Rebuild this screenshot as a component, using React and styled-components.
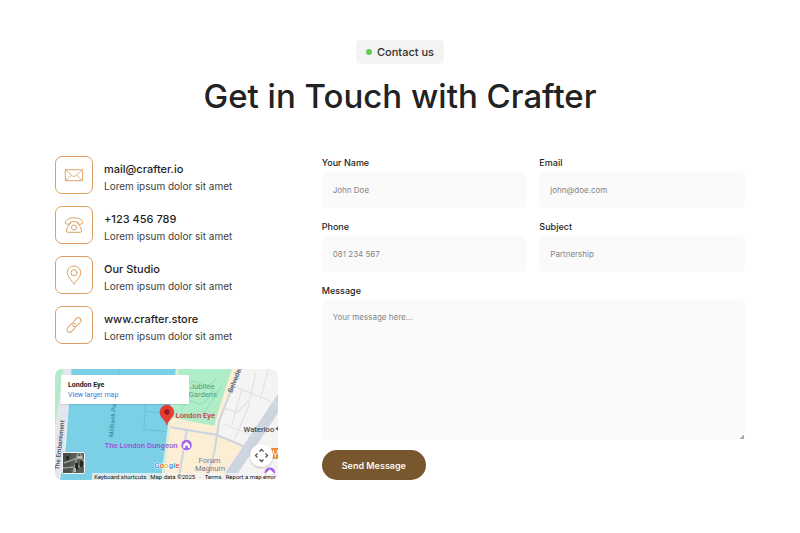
import React from "react";
import styled, { createGlobalStyle } from "styled-components";

const GlobalStyle = createGlobalStyle`
  *, *::before, *::after { box-sizing: border-box; }
  body {
    margin: 0;
    background: #ffffff;
    color: #222222;
    font-family: Inter, "Liberation Sans", sans-serif;
  }
  h1, h2, p { margin: 0; }
`;

const Page = styled.main`
  width: 100%;
  max-width: 800px;
  margin: 0 auto;
  padding: 40px 55px 53px;
`;

const Header = styled.header`
  display: flex;
  flex-direction: column;
  align-items: center;
  gap: 12px;
  text-align: center;
`;

const Badge = styled.p`
  display: flex;
  align-items: center;
  gap: 5px;
  height: 24px;
  padding: 0 10px;
  border-radius: 5px;
  background: #f4f3f2;
  color: #303030;
  font-size: 11px;
  font-weight: 500;
`;

const Dot = styled.span`
  width: 6px;
  height: 6px;
  border-radius: 50%;
  background: #62cd55;
`;

const Title = styled.h1`
  font-size: 33px;
  line-height: 40px;
  font-weight: 500;
  color: #222222;
`;

const Columns = styled.div`
  display: grid;
  grid-template-columns: minmax(0, 1fr) minmax(0, 1.9fr);
  gap: 44px;
  align-items: start;
  margin-top: 40px;
`;

const Info = styled.section`
  display: flex;
  flex-direction: column;
  gap: 25px;
`;

const ContactList = styled.ul`
  display: grid;
  gap: 12px;
  margin: 0;
  padding: 0;
  list-style: none;
`;

const ContactItem = styled.li`
  display: flex;
  align-items: flex-end;
  gap: 11px;
`;

const IconBox = styled.span`
  display: grid;
  place-items: center;
  flex: none;
  width: 38px;
  height: 38px;
  border: 1px solid #dd9f62;
  border-radius: 7px;
`;

const Icon = styled.svg`
  width: 20px;
  height: 20px;
  fill: none;
  stroke: #d9a468;
  stroke-linecap: round;
  stroke-linejoin: round;
`;

const ContactName = styled.h2`
  font-size: 11px;
  line-height: 18px;
  font-weight: 500;
  color: #1e1e1e;
`;

const ContactNote = styled.p`
  font-size: 10px;
  line-height: 16px;
  color: #414141;
  white-space: nowrap;
`;

const Map = styled.div`
  position: relative;
  height: 111px;
  overflow: hidden;
  border-radius: 7px;
  font-family: Roboto, "Liberation Sans", sans-serif;
`;

const MapArt = styled.svg`
  display: block;
  width: 100%;
  height: 100%;
`;

const MapCard = styled.div`
  position: absolute;
  top: 6px;
  left: 6px;
  width: 128px;
  height: 29px;
  padding: 5px 7px;
  background: #ffffff;
  border-radius: 1px;
  box-shadow: 0 1px 1px rgba(0, 0, 0, 0.1);
  font-size: 7px;
  line-height: 10px;
`;

const MapPlace = styled.p`
  font-weight: 700;
  color: #222222;
`;

const MapLink = styled.a`
  display: block;
  color: #327bea;
  text-decoration: none;
`;

const MapFooter = styled.div`
  position: absolute;
  right: 0;
  bottom: 0;
  display: flex;
  gap: 4px;
  height: 7px;
  padding: 0 2px;
  background: rgba(245, 245, 245, 0.75);
  font-size: 6px;
  line-height: 7px;
  color: #111111;
  white-space: nowrap;
`;

const MapFooterButton = styled.button`
  padding: 0;
  border: 0;
  background: none;
  color: inherit;
  font: inherit;
`;

const MapFooterLink = styled.a`
  color: inherit;
  text-decoration: none;
`;

const MapPan = styled.button`
  position: absolute;
  right: 5px;
  bottom: 13px;
  width: 23px;
  height: 23px;
  padding: 0;
  border: 0;
  border-radius: 50%;
  background: #ffffff;
  box-shadow: 0 1px 2px rgba(0, 0, 0, 0.2);
`;

const MapLayer = styled.button`
  position: absolute;
  left: 7px;
  bottom: 6px;
  width: 23px;
  height: 22px;
  padding: 0;
  overflow: hidden;
  border: 1px solid #f4f4f4;
  border-radius: 2px;
  background: #595d59;
`;

const Form = styled.form`
  display: grid;
  grid-template-columns: repeat(2, minmax(0, 1fr));
  gap: 12px;
`;

const Field = styled.div`
  display: flex;
  flex-direction: column;
  gap: 2px;
  grid-column: ${({ $wide }) => ($wide ? "1 / -1" : "auto")};
`;

const Label = styled.label`
  font-size: 9px;
  line-height: 14px;
  font-weight: 500;
  color: #1e1e1e;
`;

const Input = styled.input`
  width: 100%;
  height: 36px;
  padding: 0 11px;
  border: 0;
  border-radius: 6px;
  background: #fafafa;
  color: #222222;
  font: 400 8px Inter, sans-serif;
  &::placeholder { color: #858585; opacity: 1; }
`;

const TextArea = styled(Input)`
  display: block;
  height: 140px;
  padding: 11px;
  line-height: 12px;
  resize: vertical;
  &::-webkit-resizer {
    background: linear-gradient(135deg, transparent 50%, #a8a8a8 50%) 10px 10px / 4px 4px no-repeat;
  }
`;

const Submit = styled.button`
  justify-self: start;
  height: 30px;
  margin-top: -2px;
  padding: 0 20px;
  border: 0;
  border-radius: 15px;
  background: #78562e;
  color: #fbf6ef;
  font: 600 9px Inter, sans-serif;
`;

const MailIcon = () => (
  <Icon viewBox="0 0 20 20" aria-hidden="true">
    <rect x="1.3" y="4.7" width="17.4" height="11" rx="0.6" />
    <path d="M1.8 5.2 8.6 11q1.4 1 2.8 0l6.8-5.8M1.8 15.3 7.5 10.2M18.2 15.3l-5.7-5.1" strokeWidth="0.8" />
  </Icon>
);

const PhoneIcon = () => (
  <Icon viewBox="0 0 20 20" aria-hidden="true">
    <path d="M1.4 7.8C1.4 4.4 5.2 2.8 10 2.8s8.6 1.6 8.6 5c0 .9-.5 1.3-1.3 1.3h-2.4c-.9 0-1.3-.5-1.3-1.3V7.2C11.3 6.4 8.7 6.4 6.4 7.2v.6c0 .8-.4 1.3-1.3 1.3H2.7c-.8 0-1.3-.4-1.3-1.3Z" />
    <path d="M6.6 7.2c-.2 2.6-3.9 4-4.2 8.8 0 .8.5 1.3 1.3 1.3h12.6c.8 0 1.3-.5 1.3-1.3-.3-4.8-4-6.2-4.2-8.8" />
    <circle cx="10" cy="12.5" r="2.6" />
  </Icon>
);

const PinIcon = () => (
  <Icon viewBox="0 0 20 20" aria-hidden="true">
    <path d="M10 18.8C7.5 15.2 3.3 11.5 3.3 7.7a6.7 6.7 0 0 1 13.4 0c0 3.8-4.2 7.5-6.7 11.1Z" />
    <circle cx="10" cy="7.7" r="3.1" />
  </Icon>
);

const LinkIcon = () => (
  <Icon viewBox="0 0 20 20" aria-hidden="true">
    <g transform="rotate(-47 10 10)">
      <path d="M8.8 12.7H3.7a2.7 2.7 0 0 1 0-5.4h5a2.7 2.7 0 0 1 2.5 3.6" />
      <path d="M11.2 7.3h5.1a2.7 2.7 0 0 1 0 5.4h-5a2.7 2.7 0 0 1-2.5-3.6" />
    </g>
  </Icon>
);

const contacts = [
  { name: "mail@crafter.io", Glyph: MailIcon },
  { name: "+123 456 789", Glyph: PhoneIcon },
  { name: "Our Studio", Glyph: PinIcon },
  { name: "www.crafter.store", Glyph: LinkIcon },
];

const fields = [
  { id: "name", label: "Your Name", placeholder: "John Doe", type: "text" },
  { id: "email", label: "Email", placeholder: "john@doe.com", type: "email" },
  { id: "phone", label: "Phone", placeholder: "081 234 567", type: "tel" },
  { id: "subject", label: "Subject", placeholder: "Partnership", type: "text" },
];

const MapDrawing = () => (
  <MapArt viewBox="9 9 669 333" preserveAspectRatio="xMidYMid slice" role="img" aria-label="Map around the London Eye">
    <rect x="-100" y="-100" width="900" height="600" fill="#f5f4f2" />
    <path d="M372 9H560L500 178 495 342H330Z" fill="#fbeed5" />
    <path d="M495 205 590 242 520 342H330L350 184Z" fill="#fbeed5" />
    <path d="M372 9H540L502 125 487 180 355 152Z" fill="#aeedc8" />
    <path d="M9 9H38L18 150 9 190Z" fill="#b3ebca" />
    <path d="M34 9H62L36 270 20 342H9V190Z" fill="#e3e7ed" />
    <path d="M59 9H373L350 178 327 342H24L42 240Z" fill="#7bd0e5" />
    <path d="M376 9 352 178 332 342" fill="none" stroke="#d8eddb" strokeWidth="8" />
    <path d="M281 109 276 190 345 197M281 135 345 144M201 9 178 220" fill="none" stroke="#60b9c9" strokeWidth="2" />
    <path d="M407 60C430 20 463 90 493 35M390 130C435 60 430 170 485 70M450 150 510 60" fill="none" stroke="#82d4a6" strokeWidth="2" />
    <path d="M690 95 520 350" stroke="#cdd5e1" strokeWidth="32" />
    <path d="M568 -5 502 165 487 260 460 350M357 184 496 207 604 253M405 190 380 342" fill="none" stroke="#ccd4df" strokeWidth="6" />
    <path d="M534 55 690 120M570 70 540 175M612 20 590 120 550 215M520 128 555 140 590 105M650 9 625 100M520 175 604 210" fill="none" stroke="#e0e4ea" strokeWidth="4" />
    <g fontSize="23" fontWeight="500">
      <text transform="translate(22 312) rotate(-84)" fontSize="19" fill="#444c57">The Embankment</text>
      <text transform="translate(184 214) rotate(-85)" fontSize="19" fontWeight="400" fill="#348c9e">Millbank Pier</text>
      <text transform="translate(540 82) rotate(-68)" fontSize="21" fill="#545e70">Belvedere</text>
      <g fontWeight="400" fill="#559e7a" fontSize="23">
        <text x="414" y="70">Jubilee</text>
        <text x="410" y="94">Gardens</text>
      </g>
      <text x="371" y="156" fill="#cd3c3b">London Eye</text>
      <text x="158" y="246" fill="#9353d3">The London Dungeon</text>
      <text x="575" y="197" fill="#424958">Waterloo</text>
      <g fill="#718096" fontWeight="400">
        <text x="440" y="291">Forum</text>
        <text x="429" y="314">Magnum</text>
      </g>
    </g>
    <path d="M684 177 670 188 684 199Z" fill="#9c4b9e" />
    <g stroke="#fff" strokeWidth="2">
      <circle cx="404" cy="237" r="17" fill="#a266e3" />
      <circle cx="654" cy="320" r="17" fill="#a266e3" />
    </g>
    <path d="M394 236 404 227 414 236V246H408V239H400V246H394ZM643 320 654 310 665 320V329H643Z" fill="#fff" />
    <rect x="656" y="246" width="32" height="32" rx="5" fill="#ef8a37" />
    <path d="M665 252v8q0 5 5 5v9m6-22v8q0 5-6 5" fill="none" stroke="#fff" strokeWidth="3" />
    <text x="307" y="307" fontSize="24" fontWeight="500" stroke="#fff" strokeWidth="3" paintOrder="stroke">
      <tspan fill="#4285f4">G</tspan>
      <tspan fill="#ea4335">o</tspan>
      <tspan fill="#fbbc05">o</tspan>
      <tspan fill="#4285f4">g</tspan>
      <tspan fill="#34a853">l</tspan>
      <tspan fill="#ea4335">e</tspan>
    </text>
    <path d="M345 178C343 162 324 157 324 138a21 21 0 0 1 42 0c0 19-19 24-21 40Z" fill="#e83b31" stroke="#c72c27" strokeWidth="1" />
    <circle cx="345" cy="138" r="8" fill="#971b1b" />
  </MapArt>
);

export default function App() {
  return (
    <>
      <GlobalStyle />
      <Page>
        <Header>
          <Badge><Dot />Contact us</Badge>
          <Title>Get in Touch with Crafter</Title>
        </Header>
        <Columns>
          <Info>
            <ContactList>
              {contacts.map(({ name, Glyph }) => (
                <ContactItem key={name}>
                  <IconBox><Glyph /></IconBox>
                  <div>
                    <ContactName>{name}</ContactName>
                    <ContactNote>Lorem ipsum dolor sit amet</ContactNote>
                  </div>
                </ContactItem>
              ))}
            </ContactList>
            <Map>
              <MapDrawing />
              <MapCard>
                <MapPlace>London Eye</MapPlace>
                <MapLink href="#map">View larger map</MapLink>
              </MapCard>
              <MapLayer type="button" aria-label="Show satellite imagery">
                <MapArt viewBox="0 0 21 20" aria-hidden="true">
                  <path d="M0 0H8L7 20H0Z" fill="#4b504d" />
                  <path d="M1 10 20 3M10 20 15 0M0 15 21 13M17 0 21 9" stroke="#939b91" strokeWidth="1.5" />
                  <path d="M12 10h3v7h-3zM17 8h3v6h-3zM3 3h3v4H3z" fill="#242a28" />
                  <path d="M14 3h5v3h-5zM11 15h2v4h-2z" fill="#b6b9ae" />
                </MapArt>
              </MapLayer>
              <MapPan type="button" aria-label="Map camera controls">
                <MapArt viewBox="0 0 23 23" fill="none" stroke="#555" strokeWidth="1.3" aria-hidden="true">
                  <path d="m9.5 7.5 2-2 2 2M9.5 15.5l2 2 2-2M7.5 9.5l-2 2 2 2M15.5 9.5l2 2-2 2" />
                </MapArt>
              </MapPan>
              <MapFooter>
                <MapFooterButton type="button">Keyboard shortcuts</MapFooterButton>
                <span>Map data ©2025</span>
                <span aria-hidden="true">·</span>
                <MapFooterLink href="#terms">Terms</MapFooterLink>
                <MapFooterLink href="#report">Report a map error</MapFooterLink>
              </MapFooter>
            </Map>
          </Info>
          <Form onSubmit={(event) => event.preventDefault()}>
            {fields.map(({ id, label, ...input }) => (
              <Field key={id}>
                <Label htmlFor={id}>{label}</Label>
                <Input id={id} name={id} {...input} />
              </Field>
            ))}
            <Field $wide>
              <Label htmlFor="message">Message</Label>
              <TextArea as="textarea" id="message" name="message" placeholder="Your message here..." />
            </Field>
            <Submit type="submit">Send Message</Submit>
          </Form>
        </Columns>
      </Page>
    </>
  );
}
